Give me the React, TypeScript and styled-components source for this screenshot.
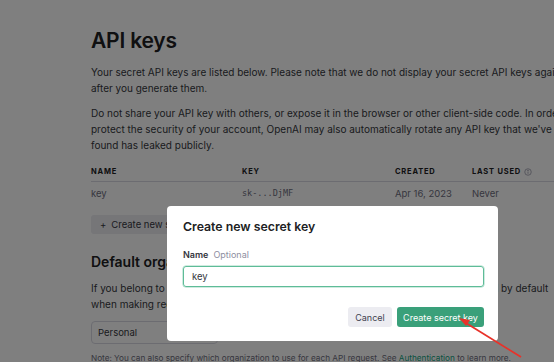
import React from "react";
import styled, { createGlobalStyle } from "styled-components";

const GlobalStyle = createGlobalStyle`
  html, body {
    margin: 0;
    padding: 0;
    background: #ffffff;
    overflow: hidden;
    width: 554px;
    height: 362px;
  }
  body {
    font-family: Inter, "Noto Sans", "Liberation Sans", sans-serif;
    color: #353740;
  }
  * { box-sizing: border-box; }
`;

const Page = styled.div`
  width: 554px;
  height: 362px;
  overflow: hidden;
  position: relative;
`;

const Content = styled.main`
  padding: 28px 0 0 91px;
  width: 640px;
`;

const Title = styled.h1`
  margin: 0 0 10px;
  font-size: 21px;
  line-height: 26px;
  font-weight: 600;
  color: #202123;
  letter-spacing: -0.2px;
`;

const Para = styled.p<{ $gap?: number }>`
  margin: 0 0 ${(p) => p.$gap ?? 9}px;
  font-size: 10px;
  line-height: 16px;
  color: #353740;
  white-space: nowrap;
`;

const Table = styled.div`
  display: grid;
  grid-template-columns: 151px 153px 77px 1fr;
  width: 520px;
  margin-top: 9px;
`;

const HeadCell = styled.div`
  font-size: 7.5px;
  font-weight: 700;
  letter-spacing: 0.8px;
  text-transform: uppercase;
  color: #202123;
  height: 20px;
  display: flex;
  align-items: center;
  gap: 3px;
  border-bottom: 1px solid #d9d9e3;
`;

const Cell = styled.div<{ $mono?: boolean }>`
  font-size: ${(p) => (p.$mono ? "8.5px" : "9.5px")};
  font-family: ${(p) =>
    p.$mono ? `"DejaVu Sans Mono", "Liberation Mono", monospace` : "inherit"};
  color: #6e6e80;
  height: 22px;
  display: flex;
  align-items: center;
`;

const GhostButton = styled.button`
  margin-top: 11px;
  height: 19px;
  width: 170px;
  border: none;
  border-radius: 3px;
  background: #ececf1;
  color: #353740;
  font-family: inherit;
  font-size: 9.5px;
  display: flex;
  align-items: center;
  gap: 5px;
  padding: 0 9px;
  white-space: nowrap;
`;

const SectionTitle = styled.h2`
  margin: 18px 0 8px;
  font-size: 14px;
  line-height: 20px;
  font-weight: 600;
  color: #202123;
`;

const Select = styled.div`
  margin-top: 9px;
  width: 127px;
  height: 23px;
  border: 1px solid #d9d9e3;
  border-radius: 4px;
  display: flex;
  align-items: center;
  padding: 0 6px;
  font-size: 9.5px;
  color: #353740;
`;

const Note = styled.p`
  margin: 8px 0 0;
  font-size: 8.2px;
  line-height: 12px;
  color: #6e6e80;
  white-space: nowrap;
`;

const Link = styled.span`
  color: #10a37f;
`;

const Overlay = styled.div`
  position: absolute;
  inset: 0;
  background: rgba(0, 0, 0, 0.5);
  padding: 206px 0 0 167px;
`;

const Modal = styled.div`
  width: 331px;
  height: 135px;
  background: #ffffff;
  border-radius: 4px;
  padding: 12px 14px 0 16px;
  display: flex;
  flex-direction: column;
`;

const ModalTitle = styled.h3`
  margin: 0;
  font-size: 12.3px;
  line-height: 18px;
  font-weight: 600;
  color: #202123;
`;

const Label = styled.div`
  margin-top: 12px;
  font-size: 9px;
  line-height: 14px;
  display: flex;
  gap: 5px;
`;

const LabelMain = styled.span`
  font-weight: 600;
  color: #353740;
`;

const LabelHint = styled.span`
  color: #8e8ea0;
`;

const Input = styled.div`
  margin-top: 4px;
  height: 21px;
  border: 1px solid #5ebc98;
  box-shadow: 0 0 0 0.5px #9fd8c2;
  border-radius: 3px;
  display: flex;
  align-items: center;
  padding: 0 8px;
  font-size: 9.5px;
  color: #353740;
`;

const Actions = styled.div`
  margin-top: 20px;
  display: flex;
  justify-content: flex-end;
  gap: 5px;
`;

const Btn = styled.button<{ $primary?: boolean }>`
  height: 20px;
  border: none;
  border-radius: 3px;
  padding: 0;
  font-family: inherit;
  font-size: 9px;
  white-space: nowrap;
  background: ${(p) => (p.$primary ? "#3aa07a" : "#ececf1")};
  color: ${(p) => (p.$primary ? "#ffffff" : "#40414f")};
  width: ${(p) => (p.$primary ? "87px" : "44px")};
`;

const Arrow = styled.svg`
  position: absolute;
  left: 0;
  top: 0;
  pointer-events: none;
`;

export default function App() {
  return (
    <>
      <GlobalStyle />
      <Page>
        <Content>
          <Title>API keys</Title>
          <Para $gap={9}>
            Your secret API keys are listed below. Please note that we do not display your secret API keys again
            <br />
            after you generate them.
          </Para>
          <Para $gap={0}>
            Do not share your API key with others, or expose it in the browser or other client-side code. In order to
            <br />
            protect the security of your account, OpenAI may also automatically rotate any API key that we've
            <br />
            found has leaked publicly.
          </Para>
          <Table>
            <HeadCell>Name</HeadCell>
            <HeadCell>Key</HeadCell>
            <HeadCell>Created</HeadCell>
            <HeadCell>
              Last used
              <svg width="8" height="8" viewBox="0 0 16 16" fill="none" stroke="#8e8ea0" strokeWidth="1.4">
                <circle cx="8" cy="8" r="6.5" />
                <line x1="8" y1="7" x2="8" y2="11.5" />
                <circle cx="8" cy="4.8" r="0.6" fill="#8e8ea0" />
              </svg>
            </HeadCell>
            <Cell>key</Cell>
            <Cell $mono>sk-...DjMF</Cell>
            <Cell>Apr 16, 2023</Cell>
            <Cell>Never</Cell>
          </Table>
          <GhostButton>
            <span>+</span> Create new secret key
          </GhostButton>
          <SectionTitle>Default organization</SectionTitle>
          <Para $gap={0}>
            If you belong to multiple organizations, this setting controls which organization is used by default
            <br />
            when making requests with the API keys above.
          </Para>
          <Select>Personal</Select>
          <Note>
            Note: You can also specify which organization to use for each API request. See{" "}
            <Link>Authentication</Link> to learn more.
          </Note>
        </Content>
        <Overlay>
          <Modal>
            <ModalTitle>Create new secret key</ModalTitle>
            <Label>
              <LabelMain>Name</LabelMain>
              <LabelHint>Optional</LabelHint>
            </Label>
            <Input>key</Input>
            <Actions>
              <Btn>Cancel</Btn>
              <Btn $primary>Create secret key</Btn>
            </Actions>
          </Modal>
        </Overlay>
        <Arrow width="554" height="362" viewBox="0 0 554 362">
          <line x1="521" y1="357" x2="466" y2="323" stroke="#e8322a" strokeWidth="1.8" />
          <polygon points="459,318 470,320 466,326" fill="#e8322a" />
        </Arrow>
      </Page>
    </>
  );
}
